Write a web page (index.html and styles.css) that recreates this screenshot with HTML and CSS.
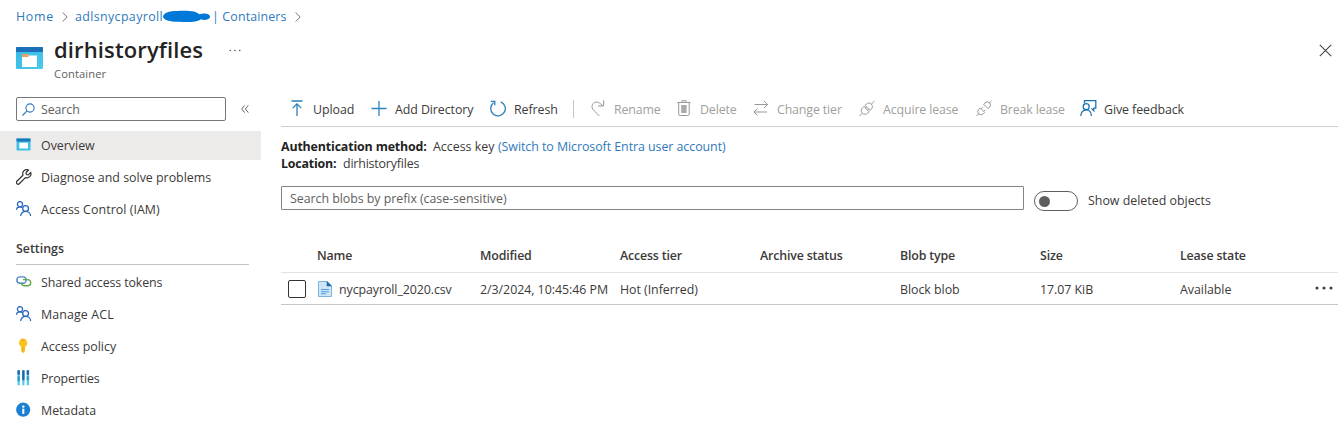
FILE: index.html
```html
<!DOCTYPE html>
<html lang="en">
<head>
<meta charset="utf-8">
<title>dirhistoryfiles</title>
<link rel="stylesheet" href="styles.css">
</head>
<body>
<svg class="defs" width="0" height="0">
  <defs>
    <symbol id="people" viewBox="0 0 16 16"><g fill="none" stroke="#2a66bd" stroke-width="1.300"><circle cx="4" cy="3.200" r="2.600"/><path d="M.6 8.800C.6 7.100 2.100 5.800 4 5.800c.9 0 1.700.3 2.300.7"/><circle cx="9.600" cy="7.500" r="2.900"/><path d="M4.700 15c0-2.700 2.200-4.600 4.900-4.600s5 1.900 5 4.600"/></g></symbol>
  </defs>
</svg>
<nav class="crumbs">
  <a class="crumb-home">Home</a>
  <svg class="chev" width="6" height="10" viewBox="0 0 6 10"><path d="M.7.5 5.200 5 .7 9.500" fill="none" stroke="#777"/></svg>
  <a class="crumb-account">adlsnycpayroll</a>
  <svg class="redact" width="48" height="13" viewBox="0 0 48 13"><path d="M0 6.500C1 3 5 1.500 9 1.200 16 .5 26 .3 31 1.500c2 .5 4 1.800 5.500 2.700C40 2.800 47 3 47 6.500c0 3-5 4.300-9 2.700-5 3.600-14 3-22 2.600C8 12 0 10 0 6.500z" fill="#0078d7"/></svg>
  <a class="crumb-section">| Containers</a>
  <svg class="chev" width="6" height="10" viewBox="0 0 6 10"><path d="M.7.5 5.200 5 .7 9.500" fill="none" stroke="#777"/></svg>
</nav>
<header class="head">
  <svg class="head-icon" width="27" height="22" viewBox="0 0 27 22"><defs><linearGradient id="sky" x2="1" y2="1"><stop stop-color="#37b9e4"/><stop offset="1" stop-color="#4cc9ea"/></linearGradient></defs><rect width="27" height="22" rx="1" fill="url(#sky)"/><path d="M0 5V1q0-1 1-1h25q1 0 1 1v4z" fill="#1a6fb8"/><path d="M6 7h6l1 1.500h8V20H6z" fill="#fff"/><path d="M6 7h6l1 2-1 1H6z" fill="#e9a165"/></svg>
  <div class="head-text">
    <h1>dirhistoryfiles</h1>
    <p>Container</p>
  </div>
  <svg class="head-more" width="12" height="3" viewBox="0 0 12 3" fill="#555"><circle cx="1.200" cy="1.500" r=".8"/><circle cx="6" cy="1.500" r=".8"/><circle cx="10.800" cy="1.500" r=".8"/></svg>
  <svg class="close" width="13" height="13" viewBox="0 0 13 13"><path d="m.8.8 11.400 11.400M12.200.8.8 12.200" stroke="#444" stroke-width="1.100"/></svg>
</header>
<div class="layout">
  <aside class="side">
    <div class="side-top">
      <div class="search"><svg width="13" height="13" viewBox="0 0 13 13" fill="none" stroke="#2f76b8" stroke-width="1.100"><circle cx="8" cy="5" r="4.100"/><path d="M5.100 7.900.5 12.500"/></svg><span>Search</span></div>
      <svg class="collapse" width="8" height="8" viewBox="0 0 8 8" fill="none" stroke="#666"><path d="M3.600.4.700 4l2.900 3.600M7.300.4 4.400 4l2.900 3.600"/></svg>
    </div>
    <ul class="menu">
      <li class="active"><svg width="16" height="16" viewBox="0 0 16 16"><path d="M.5 1.500h14v12H.5z" fill="#3fc1e6"/><path d="M.5 1.500h14V4.500H.5z" fill="#1b76bd"/><path d="M3.300 5.700h8.700v5.800H3.300z" fill="#fff"/></svg><span>Overview</span></li>
      <li><svg width="16" height="16" viewBox="0 0 16 16" fill="none" stroke="#333" stroke-width="1.200" stroke-linejoin="round"><path d="M12.600 1A4.100 4.100 0 0 0 7 6.200L.9 12.200a1.700 1.700 0 0 0 2.400 2.500l6.100-6.100a4.100 4.100 0 0 0 5.300-5.200L12.300 5.800l-2-.3-.2-2z"/></svg><span>Diagnose and solve problems</span></li>
      <li><svg width="16" height="16"><use href="#people"/></svg><span class="t-iam">Access Control (IAM)</span></li>
    </ul>
    <h2>Settings</h2>
    <ul class="menu">
      <li><svg width="16" height="16" viewBox="0 0 16 16" fill="none" stroke-width="1.400"><path d="M8.500 9.200H4a3.100 3.100 0 0 1 0-6.300h3.200a3.100 3.100 0 0 1 3 3.300" stroke="#4b86bd"/><path d="M7 5.600h4.600a3.100 3.100 0 0 1 0 6.200H8.300A3.200 3.200 0 0 1 5.200 8.500" stroke="#64a94c"/><path d="M10.200 6c-.1 1.700-.7 2.700-1.900 3.200" stroke="#4b86bd"/></svg><span class="t-sas">Shared access tokens</span></li>
      <li><svg width="16" height="16"><use href="#people"/></svg><span class="t-acl">Manage ACL</span></li>
      <li><svg width="16" height="16" viewBox="0 0 16 16"><path d="M7 0.500a4.500 4.500 0 0 1 2.100 8.300V13L7 15.200 5.200 13.200V8.800A4.500 4.500 0 0 1 7 .5z" fill="#fbc21c"/><path d="M5.500 2.200h3" stroke="#e9a51c" stroke-width="1.200"/><path d="M6.900 8.500v5" stroke="#e9a51c"/></svg><span>Access policy</span></li>
      <li><svg width="16" height="16" viewBox="0 0 16 16"><path d="M1.500.3h2.400v15H1.500zM6.200.3h2.300v15H6.200zM10.700.3h2.400v15h-2.400z" fill="#5ec8e5"/><path d="M1.500.3h2.400v4.500H1.500zM6.200.3h2.300v10H6.200zM10.700.3h2.400v4.500h-2.400z" fill="#2168a6"/><path d="M1.500 6.200h2.400v5H1.500zM10.700 6.200h2.400v4h-2.400z" fill="#349cc8"/></svg><span class="t-props">Properties</span></li>
      <li><svg width="16" height="16" viewBox="0 0 16 16"><circle cx="7.200" cy="7.700" r="7.100" fill="#1c80d2"/><path d="M6.300 6.700h2v5.200h-2z" fill="#fff"/><circle cx="7.300" cy="4.600" r="1.200" fill="#fff"/></svg><span>Metadata</span></li>
    </ul>
  </aside>
  <main class="main">
    <div class="toolbar">
      <div class="tool"><svg width="16" height="18" viewBox="0 0 16 18" fill="none" stroke="#2b7fb8" stroke-width="1.300"><path d="M2.500 1h11M8 16V3.800M3.700 8.100 8 3.800l4.300 4.300"/></svg><span>Upload</span></div>
      <div class="tool"><svg width="16" height="18" viewBox="0 0 16 18" stroke="#2b85c0" stroke-width="1.300"><path d="M.5 8.500h15M8 1v15"/></svg><span>Add Directory</span></div>
      <div class="tool"><svg width="16" height="18" viewBox="0 0 16 18" fill="none" stroke="#2b7fb8" stroke-width="1.300"><path d="M10.800 1.800A7.300 7.300 0 1 1 3.500 2.800M.8 1.300h4V5.200"/></svg><span>Refresh</span></div>
      <i class="sep"></i>
      <div class="tool off"><svg width="16" height="18" viewBox="0 0 16 18"><path d="M9.300 16 3 9.500C-.2 5.500 4.800-.3 9.400 3l3.600 2.800M13.600.3v5.700H8"/></svg><span>Rename</span></div>
      <div class="tool off"><svg width="16" height="18" viewBox="0 0 16 18"><path d="M1.200 2.500h13.300M6 2.300V.7h4v1.600M2.700 2.500V14q0 1.500 1.500 1.500h7.500q1.500 0 1.500-1.500V2.500"/><path d="M5.200 5h5.400v8H5.200z" fill="#aaa" stroke="none"/></svg><span>Delete</span></div>
      <div class="tool off"><svg width="16" height="18" viewBox="0 0 16 18"><path d="M1.500 4.500h13M11 1l3.600 3.500L11 8M14 12H1M4.500 8.500 1 12l3.500 3.500"/></svg><span>Change tier</span></div>
      <div class="tool off"><svg width="16" height="18" viewBox="0 0 16 18"><path d="m.5 16 2.900-2.900m8.900-8.900L15.500 1M3.400 13.100c-1.700-1.700-1.500-3.700.1-5.300l1.300-1.300 5.300 5.300-1.300 1.300c-1.600 1.600-3.800 1.600-5.400 0zM6 5.400l1.300-1.300c1.600-1.600 3.600-1.500 5 0s1.600 3.400 0 5L11 10.400zM6.300 8l1.600-1.600M8.500 10.200l1.600-1.600"/></svg><span>Acquire lease</span></div>
      <div class="tool off"><svg width="16" height="18" viewBox="0 0 16 18"><path d="m.5 16 2.300-2.300M13.200 3.300 15.500 1M2.800 9.300l1.400-1.400 4.500 4.500-1.400 1.400a3.100 3.100 0 0 1-4.500-4.500zM7.600 4.200 9 2.800a3.100 3.100 0 0 1 4.500 4.500l-1.400 1.400zM5.200 8.900l1.500-1.500M7.700 11.400l1.500-1.500"/></svg><span>Break lease</span></div>
      <div class="tool"><svg width="17" height="18" viewBox="0 0 17 18" fill="none" stroke="#1e72b0" stroke-width="1.300"><path d="M4.500 3.200V.7h11.300v7.500h-2v2.600l-2.400-2.400"/><circle cx="6.200" cy="6.700" r="3"/><path d="M.8 16c0-3.500 2.200-6.200 5.400-6.200s5.200 2.700 5.200 6.200"/></svg><span>Give feedback</span></div>
    </div>
    <div class="info">
      <p><b class="b-auth">Authentication method:</b><span class="t-key">Access key</span><a class="t-switch">(Switch to Microsoft Entra user account)</a></p>
      <p><b class="b-loc">Location:</b><span class="t-loc">dirhistoryfiles</span></p>
    </div>
    <div class="filter">
      <div class="prefix"><span>Search blobs by prefix (case-sensitive)</span></div>
      <div class="toggle"><i></i></div>
      <span class="t-deleted">Show deleted objects</span>
    </div>
    <div class="row heading"><span></span><span>Name</span><span>Modified</span><span>Access tier</span><span>Archive status</span><span>Blob type</span><span>Size</span><span>Lease state</span><span></span></div>
    <div class="row item">
      <span class="check"></span>
      <div class="file"><svg width="14" height="16" viewBox="0 0 14 16"><path d="M.5.5h8.700l4.300 4.300v10.700H.5z" fill="#cfe6f8" stroke="#7cb4e0"/><path d="M8.700 0 14 5.300H8.700z" fill="#1d69ae"/><path d="M3 8.500h8M3 10.700h8M3 12.800h5" stroke="#4e9bdc" stroke-width="1.100"/></svg><span>nycpayroll_2020.csv</span></div>
      <span>2/3/2024, 10:45:46 PM</span><span>Hot (Inferred)</span><span></span><span>Block blob</span><span>17.07 KiB</span><span>Available</span>
      <svg class="dots" width="18" height="4" viewBox="0 0 18 4" fill="#444"><circle cx="2" cy="2" r="1.600"/><circle cx="9" cy="2" r="1.600"/><circle cx="16" cy="2" r="1.600"/></svg>
    </div>
  </main>
</div>
</body>
</html>
```
FILE: styles.css
```css
* { box-sizing: border-box; }
body {
  margin: 0;
  height: 440px;
  overflow: hidden;
  background: #fff;
  color: #3b3a39;
  font: 12.400px/18px "Open Sans", "Noto Sans", sans-serif;
  white-space: nowrap;
}
h1, h2, p, ul { margin: 0; padding: 0; }
svg { display: block; flex: none; }
.defs { position: absolute; }
a { color: #2f7abb; }

.crumbs {
  display: flex;
  align-items: center;
  height: 33px;
  padding-left: 16px;
}
.crumb-home { width: 46px; letter-spacing: .7px; }
.crumb-account { width: 87px; margin-left: 7px; letter-spacing: .38px; }
.crumb-section { width: 83px; margin-left: 1px; letter-spacing: .15px; }
.redact { margin-left: 1px; }

.head {
  display: flex;
  height: 64px;
  padding: 0 6px 0 16px;
}
.head-icon { margin-top: 14px; }
.head-text { width: 149px; margin-left: 11px; }
h1 {
  color: #242322;
  font-size: 22px;
  font-weight: 600;
  line-height: 32px;
  letter-spacing: .13px;
}
.head-text p { padding-top: 1px; color: #605e5c; font-size: 11.200px; line-height: 16px; letter-spacing: .1px; }
.head-more { margin: 16px 0 0 26px; }
.close { margin: 11px 0 0 auto; }

.layout { display: grid; grid-template-columns: 261px 1fr; column-gap: 20px; }

.side-top { display: flex; align-items: center; height: 24px; padding-left: 16px; }
.search {
  display: flex;
  align-items: center;
  gap: 6px;
  width: 210px;
  height: 24px;
  padding-left: 5px;
  border: 1px solid #777;
  border-radius: 2px;
  color: #605e5c;
}
.search span { padding-top: 2px; letter-spacing: -.1px; }
.collapse { margin-left: 15px; }
.menu { list-style: none; }
.side-top + .menu { margin-top: 8px; }
.menu li {
  display: flex;
  align-items: center;
  gap: 9px;
  height: 32px;
  padding-left: 16px;
}
.menu span { padding-top: 2px; }
.menu .active {
  background: linear-gradient(#edebe9, #edebe9) 0 2px / 100% 29px no-repeat;
}
.t-iam { letter-spacing: .06px; }
.t-sas { letter-spacing: -.12px; }
.t-acl { letter-spacing: .12px; }
.t-props { letter-spacing: -.15px; }
h2 {
  height: 40px;
  margin: 0 12px 1px 16px;
  padding-top: 15px;
  border-bottom: 1px solid #c4c4c4;
  font-size: 12.400px;
  font-weight: 600;
  line-height: 18px;
}

.toolbar {
  display: grid;
  grid-template-columns: 82px 119px 83px 17px 86px 77px 106px 117px 104px 1fr;
  align-items: center;
  height: 30px;
  padding: 0 0 5px 8px;
  border-bottom: 1px solid #cfcfcf;
}
.tool { display: flex; align-items: center; gap: 8px; letter-spacing: -.08px; }
.tool span { padding-top: 2px; }
.tool:last-child { gap: 7px; }
.off { color: #a19f9d; letter-spacing: -.14px; }
.off svg { fill: none; stroke: #999; stroke-width: 1; }
.sep { width: 1px; height: 18px; background: #c8c6c4; }

.info { padding-top: 11px; line-height: 17px; }
.info p { display: flex; gap: 6px; }
.info b { color: #222; }
.b-auth { width: 146px; letter-spacing: -.15px; }
.b-loc { width: 56px; letter-spacing: -.2px; }
.t-key { width: 61px; }
.t-loc { letter-spacing: -.18px; }
.info .t-switch { margin-left: -2px; letter-spacing: -.05px; }

.filter { display: flex; height: 24px; margin-top: 14px; }
.prefix {
  width: 743px;
  height: 24px;
  padding-left: 8px;
  border: 1px solid #848484;
  border-radius: 1px;
  color: #605e5c;
  line-height: 23px;
  letter-spacing: -.04px;
}
.toggle {
  display: flex;
  align-items: center;
  width: 44px;
  height: 20px;
  margin: 5px 10px 0;
  padding-left: 4px;
  border: 1px solid #605e5c;
  border-radius: 10px;
}
.toggle i { width: 11px; height: 11px; border-radius: 50%; background: #605e5c; }
.t-deleted { margin-top: 6px; }

.row {
  display: grid;
  grid-template-columns: 29px 163px 140px 140px 140px 140px 140px 135px 1fr;
  align-items: center;
  padding-left: 7px;
}
.row span { padding-top: 2px; }
.heading {
  height: 35px;
  margin-top: 28px;
  border-bottom: 1px solid #e4e3e2;
  font-weight: 600;
  letter-spacing: -.16px;
}
.item { height: 32px; border-bottom: 1px solid #c6c6c6; letter-spacing: -.04px; }
.row .check { width: 18px; height: 18px; padding: 0; border: 1px solid #333; border-radius: 2px; }
.file { display: flex; gap: 8px; align-items: center; padding-left: 1px; letter-spacing: -.08px; }
.file svg { margin-right: -1px; }
.dots { margin-top: -2px; }
```
